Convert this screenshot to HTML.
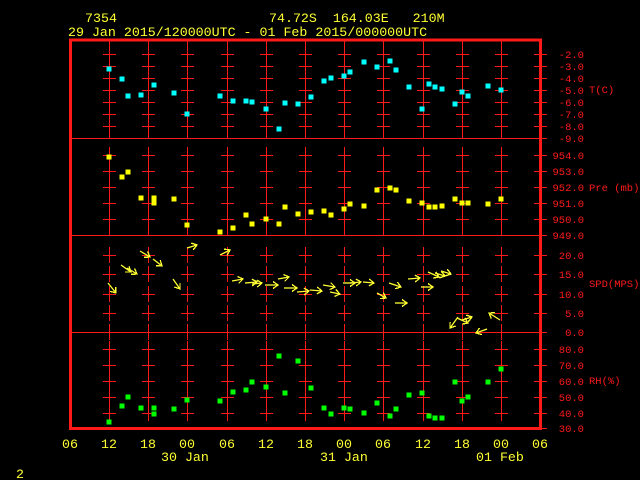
<!DOCTYPE html>
<html><head><meta charset="utf-8"><style>
html,body{margin:0;padding:0;background:#000;width:640px;height:480px;overflow:hidden}
svg{display:block}
text{font-family:"Liberation Mono",monospace}
.y{fill:#ffff33;font-size:13.3px}
.r{fill:#ff1a1a;font-size:10.5px}
</style></head><body>
<svg id="s" width="640" height="480" viewBox="0 0 640 480" shape-rendering="crispEdges">
<defs>
<marker id="ah" markerWidth="8" markerHeight="8" refX="6" refY="4" orient="auto" markerUnits="userSpaceOnUse">
<path d="M1,0.5 L6,4 L1,7.5" fill="none" stroke="#ffff33" stroke-width="1.3"/>
</marker>
</defs>
<g id="grid" stroke="#ff1a1a" stroke-width="1"></g>
<g id="frame" fill="none" stroke="#ff1a1a">
<rect x="70.5" y="40" width="470" height="388.5" stroke-width="3"/>
<line x1="70" y1="138.5" x2="540" y2="138.5" stroke-width="1"/>
<line x1="70" y1="235.5" x2="540" y2="235.5" stroke-width="1"/>
<line x1="70" y1="332.5" x2="540" y2="332.5" stroke-width="1"/>
</g>
<g id="pts"></g>
<g id="wind" stroke="#ffff33" stroke-width="1.3" fill="none" marker-end="url(#ah)" shape-rendering="auto"></g>

<text class="y" x="85" y="22">7354</text>
<text class="y" x="269" y="22" xml:space="preserve">74.72S  164.03E   210M</text>
<text class="y" x="68" y="36">29 Jan 2015/120000UTC - 01 Feb 2015/000000UTC</text>

<g class="r" text-anchor="end">
<text class="r" x="584" y="58">-2.0</text><text class="r" x="584" y="70">-3.0</text><text class="r" x="584" y="82">-4.0</text><text class="r" x="584" y="94">-5.0</text><text class="r" x="584" y="106">-6.0</text><text class="r" x="584" y="118">-7.0</text><text class="r" x="584" y="130">-8.0</text><text class="r" x="584" y="142">-9.0</text>
<text class="r" x="584" y="159">954.0</text><text class="r" x="584" y="175">953.0</text><text class="r" x="584" y="191">952.0</text><text class="r" x="584" y="207">951.0</text><text class="r" x="584" y="223">950.0</text><text class="r" x="584" y="239">949.0</text>
<text class="r" x="584" y="259">20.0</text><text class="r" x="584" y="278">15.0</text><text class="r" x="584" y="298">10.0</text><text class="r" x="584" y="317">5.0</text><text class="r" x="584" y="336">0.0</text>
<text class="r" x="584" y="353">80.0</text><text class="r" x="584" y="369">70.0</text><text class="r" x="584" y="385">60.0</text><text class="r" x="584" y="401">50.0</text><text class="r" x="584" y="417">40.0</text><text class="r" x="584" y="432">30.0</text>
</g>
<text class="r" x="589" y="93">T(C)</text>
<text class="r" x="589" y="191" xml:space="preserve">Pre (mb)</text>
<text class="r" x="589" y="287">SPD(MPS)</text>
<text class="r" x="589" y="384">RH(%)</text>

<g text-anchor="middle">
<text class="y" x="70" y="448">06</text><text class="y" x="109" y="448">12</text><text class="y" x="148" y="448">18</text><text class="y" x="187" y="448">00</text><text class="y" x="227" y="448">06</text><text class="y" x="266" y="448">12</text><text class="y" x="305" y="448">18</text><text class="y" x="344" y="448">00</text><text class="y" x="383" y="448">06</text><text class="y" x="423" y="448">12</text><text class="y" x="462" y="448">18</text><text class="y" x="501" y="448">00</text><text class="y" x="540" y="448">06</text>
</g>
<text class="y" x="161" y="461">30 Jan</text>
<text class="y" x="320" y="461">31 Jan</text>
<text class="y" x="476" y="461">01 Feb</text>
<text class="y" x="16" y="478">2</text>
</svg>
<script>
var NS="http://www.w3.org/2000/svg";
function el(p,t,a){var e=document.createElementNS(NS,t);for(var k in a)e.setAttribute(k,a[k]);p.appendChild(e);return e;}
var g=document.getElementById('grid');
var xs=[109,148,187,227,266,305,344,383,423,462,501];
var ys=[54,66,78,90,102,114,126,155,171,187,203,219,255,274,294,313,349,365,381,397,413];
var seps=[138,235,332];
xs.forEach(function(x){
  ys.forEach(function(y){
    el(g,'line',{x1:x-6,y1:y+.5,x2:x+7,y2:y+.5});
    el(g,'line',{x1:x+.5,y1:y-8,x2:x+.5,y2:y+8});
  });
  seps.forEach(function(y){el(g,'line',{x1:x+.5,y1:y-8,x2:x+.5,y2:y});});
  el(g,'line',{x1:x+.5,y1:332,x2:x+.5,y2:340});
  el(g,'line',{x1:x+.5,y1:40,x2:x+.5,y2:46});
});
ys.concat([138,235,332,428]).forEach(function(y){el(g,'line',{x1:534,y1:y+.5,x2:547,y2:y+.5});});
var P=document.getElementById('pts');
function pts(arr,c){arr.forEach(function(p){el(P,'rect',{x:p[0]-2.5,y:p[1]-2.5,width:5,height:5,fill:c});});}
pts([[109,69],[122,79],[128,96],[141,95],[154,85],[174,93],[187,114],[220,96],[233,101],[246,101],[252,102],[266,109],[279,129],[285,103],[298,104],[311,97],[324,81],[331,78],[344,76],[350,72],[364,62],[377,67],[390,61],[396,70],[409,87],[422,109],[429,84],[435,87],[442,89],[455,104],[462,92],[468,96],[488,86],[501,90]],'#00ffff');
pts([[109,157],[122,177],[128,172],[141,198],[154,198],[154,203],[174,199],[187,225],[220,232],[233,228],[246,215],[252,224],[266,219],[279,224],[285,207],[298,214],[311,212],[324,211],[331,215],[344,209],[350,204],[364,206],[377,190],[390,188],[396,190],[409,201],[422,203],[429,207],[435,207],[442,206],[455,199],[462,203],[468,203],[488,204],[501,199]],'#ffff00');
pts([[109,422],[122,406],[128,397],[141,408],[154,408],[154,414],[174,409],[187,400],[220,401],[233,392],[246,390],[252,382],[266,387],[279,356],[285,393],[298,361],[311,388],[324,408],[331,414],[344,408],[350,409],[364,413],[377,403],[390,416],[396,409],[409,395],[422,393],[429,416],[435,418],[442,418],[455,382],[462,401],[468,397],[488,382],[501,369]],'#00ff00');
var W=document.getElementById('wind');
[[108,283,116,293],[140,251,150,257],[153,259,162,266],[121,265,131,272],[127,268,137,274],[173,279,180,289],[187,248,197,245],[220,255,230,250],[232,281,243,279],[245,283,257,282],[252,284,262,283],[265,285,278,285],[278,279,289,277],[284,288,297,288],[297,292,309,291],[310,290,322,291],[323,285,335,287],[330,292,340,294],[343,283,355,283],[350,283,361,282],[363,282,374,283],[377,293,386,298],[389,283,401,287],[395,303,407,303],[408,279,420,278],[421,287,433,287],[428,272,439,277],[435,273,445,276],[441,271,451,274],[458,317,450,328],[457,318,468,323],[462,320,472,317],[500,320,489,313],[487,329,476,333]].forEach(function(a){
  el(W,'line',{x1:a[0],y1:a[1],x2:a[2],y2:a[3]});
});
</script>
</body></html>
